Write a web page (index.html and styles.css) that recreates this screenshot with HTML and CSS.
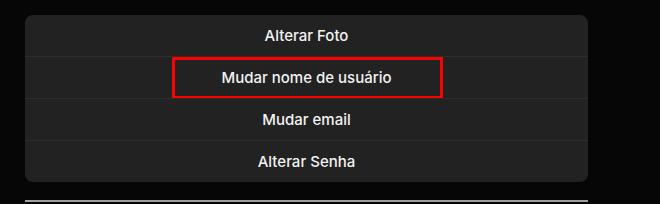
FILE: index.html
```html
<html lang="pt-BR"><head>
  <meta charset="UTF-8">
  <meta name="viewport" content="width=device-width, initial-scale=1.0">
  <title>Configurações da conta</title>
  <link rel="stylesheet" href="styles.css">
</head>
<body>
  <div class="settings">
    <div class="options">
      <div class="option">Alterar Foto</div>
      <div class="option highlight">Mudar nome de usuário</div>
      <div class="option">Mudar email</div>
      <div class="option">Alterar Senha</div>
    </div>
    <hr class="separator">
  </div>
</body></html>
```

FILE: styles.css
```css
body {
  margin: 0;
  background: #060606;
  font-family: "Inter", "Noto Sans", sans-serif;
  color: #f2f2f2;
}

.settings {
  width: 563px;
  padding: 15px 0 0 25px;
}

.options {
  background: #222222;
  border-radius: 8px;
}

.option {
  position: relative;
  height: 41px;
  display: flex;
  align-items: center;
  justify-content: center;
  font-size: 15px;
  font-weight: 500;
  border-top: 1px solid #2d2d2d;
}

.option:first-child {
  border-top: none;
}

.option.highlight::after {
  content: "";
  position: absolute;
  left: 147px;
  top: 0;
  width: 271px;
  height: 42px;
  border: 3px solid #ff0000;
  box-sizing: border-box;
}

.separator {
  margin: 18px 0 0 0;
  border: none;
  height: 2px;
  background: #a0a0a0;
}
```
